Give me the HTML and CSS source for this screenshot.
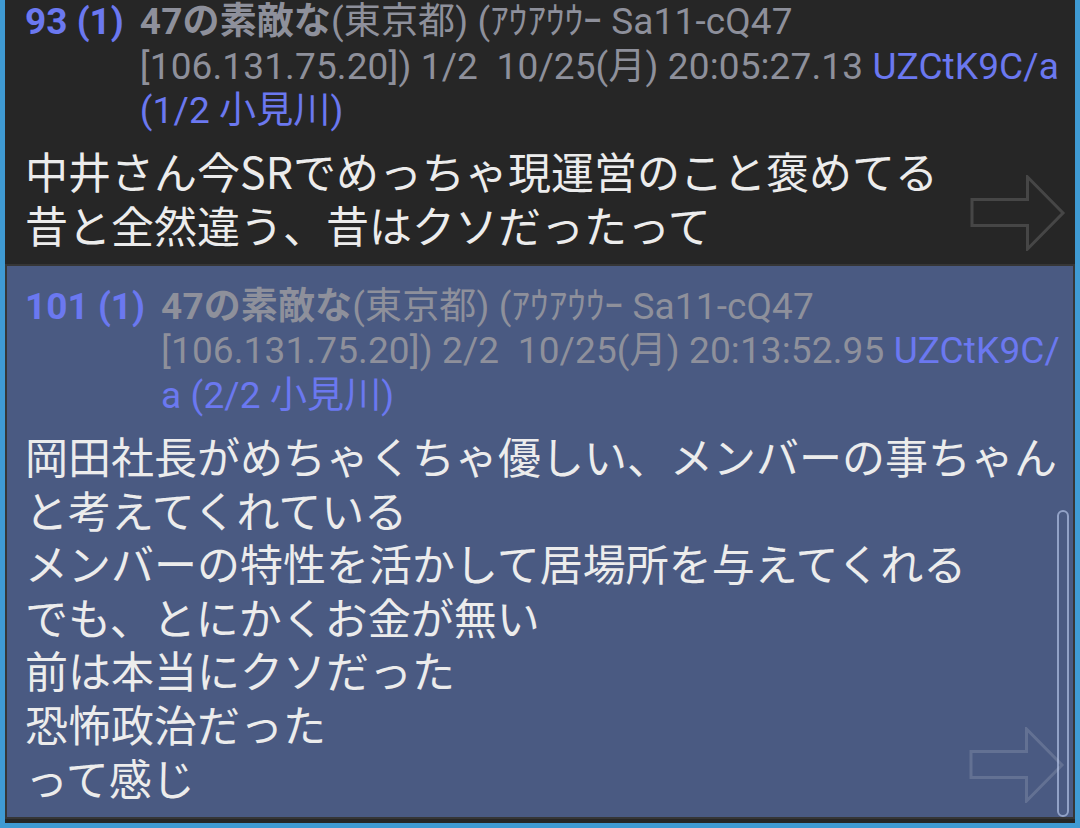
FILE: index.html
```html
<!DOCTYPE html>
<html lang="ja">
<head>
<meta charset="utf-8">
<link rel="stylesheet" href="styles.css">
</head>
<body>
<div class="frame">
  <div class="list">
    <article class="post">
      <div class="head">
        <span class="num">93 (1)</span>
        <span class="meta"><b class="name">47の素敵な</b>(東京都) (ｱｳｱｳｳｰ Sa11-cQ47 [106.131.75.20]) 1/2&nbsp; 10/25(月) 20:05:27.13 <span class="id">UZCtK9C/a</span> <span class="id">(1/2 小見川)</span></span>
      </div>
      <div class="body">中井さん今SRでめっちゃ現運営のこと褒めてる<br>昔と全然違う、昔はクソだったって</div>
      <svg class="arrow" viewBox="0 0 96 76" width="96" height="76"><path d="M2 24.5 H57.5 V2 L93 38 L57.5 74 V50.5 H2 Z" fill="none" stroke="currentColor" stroke-width="3" stroke-linejoin="miter"/></svg>
    </article>
    <article class="post selected">
      <div class="head">
        <span class="num">101 (1)</span>
        <span class="meta"><b class="name">47の素敵な</b>(東京都) (ｱｳｱｳｳｰ Sa11-cQ47 [106.131.75.20]) 2/2&nbsp; 10/25(月) 20:13:52.95 <span class="id">UZCtK9C/<wbr>a</span> <span class="id">(2/2 小見川)</span></span>
      </div>
      <div class="body">岡田社長がめちゃくちゃ優しい、メンバーの事ちゃんと考えてくれている<br>メンバーの特性を活かして居場所を与えてくれる<br>でも、とにかくお金が無い<br>前は本当にクソだった<br>恐怖政治だった<br>って感じ</div>
      <svg class="arrow" viewBox="0 0 96 76" width="96" height="76"><path d="M2 24.5 H57.5 V2 L93 38 L57.5 74 V50.5 H2 Z" fill="none" stroke="currentColor" stroke-width="3" stroke-linejoin="miter"/></svg>
      <div class="scrollbar"></div>
    </article>
  </div>
</div>
</body>
</html>
```
FILE: styles.css
```css
html, body {
  margin: 0;
  padding: 0;
  width: 1080px;
  height: 828px;
  overflow: hidden;
  background: #3f9ad3;
}
.frame {
  box-sizing: border-box;
  width: 1080px;
  height: 828px;
  padding: 0 5px 5px 5px;
}
.list {
  height: 100%;
  background: #262626;
  overflow: hidden;
  font-family: Roboto, "Noto Sans CJK JP", sans-serif;
}
.post {
  position: relative;
  padding: 20px 10px 12.8px 20px;
}
.post:first-child {
  margin-top: -20px;
}
.post.selected {
  background: #4a5a82;
  border: 2px solid #363636;
  padding: 19px 8px 13px 18px;
}
.head {
  display: flex;
  gap: 16px;
  font-size: 37px;
  line-height: 44.5px;
  color: #8e909b;
}
.num {
  font-weight: 700;
  color: #6b78f0;
  white-space: nowrap;
  flex: none;
}
.meta {
  flex: 1;
  min-width: 0;
  letter-spacing: 0.12px;
}
.name {
  font-weight: 700;
}
.id {
  color: #6b78f0;
}
.body {
  margin-top: 10.5px;
  font-family: "Noto Sans CJK JP", sans-serif;
  font-size: 43px;
  line-height: 53.6px;
  color: #ececec;
}
.arrow {
  position: absolute;
  right: 9px;
  bottom: 13px;
  color: rgba(255, 255, 255, 0.15);
}
.selected .arrow {
  right: 8px;
  bottom: 14px;
  color: rgba(255, 255, 255, 0.14);
}
.scrollbar {
  position: absolute;
  right: 4px;
  bottom: 0;
  width: 8px;
  height: 303px;
  border: 2.5px solid rgba(195, 210, 245, 0.6);
  border-radius: 8px;
}
```
